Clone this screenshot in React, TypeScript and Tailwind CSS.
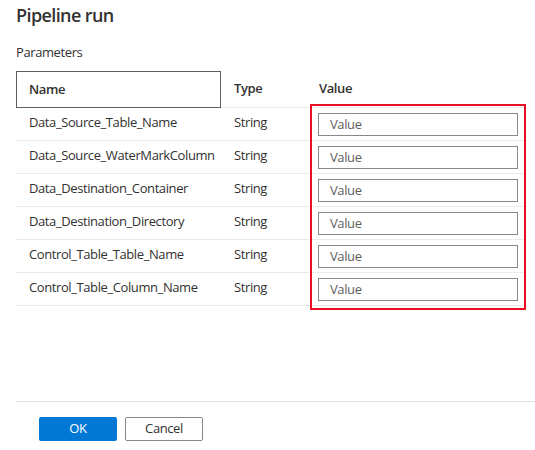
import React from 'react';

const params = [
  'Data_Source_Table_Name',
  'Data_Source_WaterMarkColumn',
  'Data_Destination_Container',
  'Data_Destination_Directory',
  'Control_Table_Table_Name',
  'Control_Table_Column_Name',
];

const font = { fontFamily: '"Segoe UI", "Open Sans", "Noto Sans", sans-serif' };

export default function App() {
  return (
    <div className="w-[535px] h-[450px] bg-white flex flex-col text-[#323130] tracking-[-0.4px]" style={font}>
      <div className="flex-1 pl-[16px] pr-[9px]">
        <h1 className="text-[18px] leading-[24px] font-semibold mt-[3px] tracking-[-0.6px]">Pipeline run</h1>
        <div className="text-[13px] leading-[18px] mt-[16px]">Parameters</div>

        <div className="relative mt-[10px]">
          {/* header */}
          <div className="flex h-[37px] text-[13px] font-semibold">
            <div className="w-[205px] border border-[#605e5c] flex items-center pl-[12px] pt-[1px]">Name</div>
            <div className="w-[85px] flex items-center pl-[13px] border-b border-[#edebe9]">Type</div>
            <div className="flex-1 flex items-center pl-[13px] border-b border-[#edebe9]">Value</div>
          </div>

          {params.map((p) => (
            <div key={p} className="flex h-[33px] text-[13px] border-b border-[#edebe9]">
              <div className="w-[205px] flex items-center pl-[13px] pb-[3px]">{p}</div>
              <div className="w-[85px] flex items-center pl-[13px] pb-[3px]">String</div>
              <div className="flex-1 flex items-center pl-[12px]">
                <div className="w-[200px] h-[23px] border border-[#8a8886] flex items-center pl-[11px] pt-[1px] text-[#605e5c]">
                  Value
                </div>
              </div>
            </div>
          ))}

          {/* annotation */}
          <div className="absolute left-[294px] top-[33px] w-[216px] h-[206px] border-2 border-[#e81123]" />
        </div>
      </div>

      <div className="ml-[16px] border-t border-[#e1dfdd] h-[49px] flex items-start pt-[15px] pl-[23px] gap-[8px] text-[13px]">
        <button className="w-[78px] h-[24px] bg-[#0078d4] text-white rounded-[2px] flex items-center justify-center">
          OK
        </button>
        <button className="w-[78px] h-[24px] bg-white border border-[#8a8886] rounded-[2px] flex items-center justify-center">
          Cancel
        </button>
      </div>
    </div>
  );
}
